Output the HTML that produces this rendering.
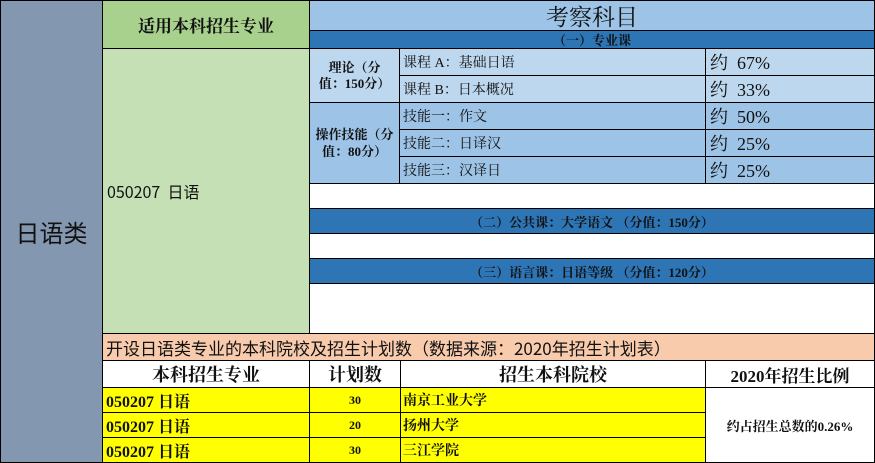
<!DOCTYPE html>
<html><head><meta charset="utf-8"><style>
body{margin:0;width:875px;height:463px;overflow:hidden;font-family:"Liberation Serif","Noto Serif CJK SC","Noto Sans CJK SC",serif;background:#fff}
div{position:absolute;box-sizing:border-box;border:1px solid #000;display:flex;align-items:center;color:#111;overflow:hidden;white-space:nowrap}
.c{justify-content:center;text-align:center}
.b{font-weight:bold}
.lt{background:#bdd7ee}.md{background:#9dc3e6}.dk{background:#2e75b6}.y{background:#ffff00}
</style></head><body>
<div class="c" style="left:0;top:0;width:103px;height:463px;background:#8497b0;font-size:24px;font-family:'Noto Sans CJK SC',sans-serif">日语类</div>
<div class="c b" style="left:102px;top:0;width:208px;height:49px;background:#a9d18e;font-size:17px">适用本科招生专业</div>
<div style="left:102px;top:48px;width:208px;height:286px;background:#c5e0b4;font-size:16px;padding-left:4px;font-family:'Noto Sans CJK SC',sans-serif">050207&nbsp;&nbsp;日语</div>
<div class="c md" style="left:309px;top:0;width:566px;height:31px;font-size:23px">考察科目</div>
<div class="c dk b" style="left:309px;top:30px;width:566px;height:19px;font-size:13px">（一）专业课</div>
<div class="c lt b" style="left:309px;top:48px;width:91px;height:55px;font-size:13px;white-space:normal;line-height:16px;padding:0 8px">理论（分值：150分）</div>
<div class="c md b" style="left:309px;top:102px;width:91px;height:82px;font-size:13px;white-space:normal;line-height:17px;padding:0 2px">操作技能（分值：80分）</div>
<div class="lt" style="left:399px;top:48px;width:307px;height:28px;font-size:14px;padding-left:3px">课程 A：基础日语</div>
<div class="lt" style="left:399px;top:75px;width:307px;height:28px;font-size:14px;padding-left:3px">课程 B：日本概况</div>
<div class="md" style="left:399px;top:102px;width:307px;height:28px;font-size:14px;padding-left:3px">技能一：作文</div>
<div class="md" style="left:399px;top:129px;width:307px;height:28px;font-size:14px;padding-left:3px">技能二：日译汉</div>
<div class="md" style="left:399px;top:156px;width:307px;height:28px;font-size:14px;padding-left:3px">技能三：汉译日</div>
<div class="lt" style="left:705px;top:48px;width:170px;height:28px;font-size:18px;padding-left:4px">约&nbsp;&nbsp;67%</div>
<div class="lt" style="left:705px;top:75px;width:170px;height:28px;font-size:18px;padding-left:4px">约&nbsp;&nbsp;33%</div>
<div class="md" style="left:705px;top:102px;width:170px;height:28px;font-size:18px;padding-left:4px">约&nbsp;&nbsp;50%</div>
<div class="md" style="left:705px;top:129px;width:170px;height:28px;font-size:18px;padding-left:4px">约&nbsp;&nbsp;25%</div>
<div class="md" style="left:705px;top:156px;width:170px;height:28px;font-size:18px;padding-left:4px">约&nbsp;&nbsp;25%</div>
<div style="left:309px;top:183px;width:566px;height:26px;background:#fff"></div>
<div class="c dk b" style="left:309px;top:208px;width:566px;height:26px;font-size:13px">（二）公共课：大学语文 （分值：150分）</div>
<div style="left:309px;top:233px;width:566px;height:26px;background:#fff"></div>
<div class="c dk b" style="left:309px;top:258px;width:566px;height:26px;font-size:13px">（三）语言课：日语等级 （分值：120分）</div>
<div style="left:309px;top:283px;width:566px;height:51px;background:#fff"></div>
<div style="left:102px;top:333px;width:773px;height:28px;background:#f8cbad;font-size:17px;padding-left:3px;font-family:'Noto Sans CJK SC',sans-serif">开设日语类专业的本科院校及招生计划数（数据来源：2020年招生计划表）</div>
<div class="c b" style="left:102px;top:360px;width:208px;height:28px;font-size:18px">本科招生专业</div>
<div class="c b" style="left:309px;top:360px;width:92px;height:28px;font-size:18px">计划数</div>
<div class="c b" style="left:400px;top:360px;width:306px;height:28px;font-size:18px">招生本科院校</div>
<div class="c b" style="left:705px;top:360px;width:170px;height:28px;font-size:17px">2020年招生比例</div>
<div class="y b" style="left:102px;top:387px;width:208px;height:26px;font-size:16px;padding-left:3px">050207&nbsp;日语</div>
<div class="y b" style="left:102px;top:412px;width:208px;height:26px;font-size:16px;padding-left:3px">050207&nbsp;日语</div>
<div class="y b" style="left:102px;top:437px;width:208px;height:26px;font-size:16px;padding-left:3px">050207&nbsp;日语</div>
<div class="y c b" style="left:309px;top:387px;width:92px;height:26px;font-size:12px">30</div>
<div class="y c b" style="left:309px;top:412px;width:92px;height:26px;font-size:12px">20</div>
<div class="y c b" style="left:309px;top:437px;width:92px;height:26px;font-size:12px">30</div>
<div class="y b" style="left:400px;top:387px;width:306px;height:26px;font-size:14px;padding-left:2px">南京工业大学</div>
<div class="y b" style="left:400px;top:412px;width:306px;height:26px;font-size:14px;padding-left:2px">扬州大学</div>
<div class="y b" style="left:400px;top:437px;width:306px;height:26px;font-size:14px;padding-left:2px">三江学院</div>
<div class="c b" style="left:705px;top:387px;width:170px;height:76px;font-size:13px;background:#fff">约占招生总数的0.26%</div>
</body></html>
